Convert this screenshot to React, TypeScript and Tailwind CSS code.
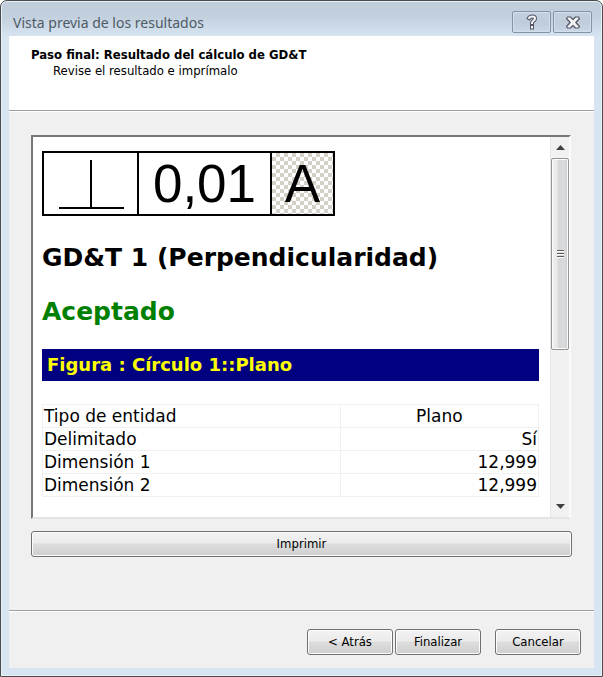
import type { ReactNode } from "react";

type EntityRow = {
  label: string;
  value: string;
  centered?: boolean;
};

const rows: EntityRow[] = [
  { label: "Tipo de entidad", value: "Plano", centered: true },
  { label: "Delimitado", value: "Sí" },
  { label: "Dimensión 1", value: "12,999" },
  { label: "Dimensión 2", value: "12,999" },
];

function DialogButton({ children, className = "" }: { children: ReactNode; className?: string }) {
  return <button type="button" className={`flex h-[26px] items-center justify-center rounded-[3px] border border-[#707070] bg-[linear-gradient(#f2f2f2_0%,#ebebeb_46%,#dddddd_50%,#cfcfcf_100%)] text-black shadow-[inset_0_0_0_1px_#fcfcfc] ${className}`}>
    {children}
  </button>;
}

function CaptionButton({ label, children }: { label: string; children: ReactNode }) {
  return <button type="button" aria-label={label} className="flex h-[22px] w-[39px] items-center justify-center rounded-[2px] border border-[#8393a8] bg-[linear-gradient(#c3d0de,#bfccda_50%,#c9d7e6)] shadow-[inset_0_0_0_1px_#d3deea]">
    {children}
  </button>;
}

function Divider() {
  return <div className="h-[2px] shrink-0 border-t border-[#a0a0a0] bg-white" />;
}

function ToleranceFrame() {
  return <div className="flex h-[65px] w-fit border-2 border-black font-['Liberation_Sans',Arial,sans-serif] text-[53px] leading-[61px] text-black">
    <div className="w-[95px] border-r-2 border-black">
      <svg width="93" height="61" viewBox="0 0 93 61" role="img" aria-label="Perpendicularidad">
        <path d="M47 7V54M15 55H80" fill="none" stroke="#000" strokeWidth="2" />
      </svg>
    </div>
    <div className="w-[133px] border-r-2 border-black text-center">0,01</div>
    <div className="w-[61px] bg-[conic-gradient(#d4d0c8_25%,#fff_0_50%,#d4d0c8_0_75%,#fff_0)] bg-size-[8px_8px] text-center">A</div>
  </div>;
}

function ScrollBar() {
  return <div className="flex w-[19px] shrink-0 flex-col items-center border-l border-[#e6e6e6] bg-[#f1f1f1]">
    <button type="button" aria-label="Subir" className="flex h-[21px] w-full shrink-0 items-center justify-center">
      <svg width="9" height="5" viewBox="0 0 9 5"><path d="M4.5 0L9 5H0Z" fill="#404040" /></svg>
    </button>
    <div className="flex h-[192px] w-full flex-col items-center justify-center gap-px rounded-[2px] border border-[#959595] bg-[linear-gradient(90deg,#f3f3f3_0%,#e6e6e8_34%,#d7d8da_36%,#d9dadc_80%,#c9cacc_100%)] shadow-[inset_0_0_0_1px_#fafafa]">
      <span className="h-[2px] w-[7px] border-b border-white bg-[#5a5a5a]" />
      <span className="h-[2px] w-[7px] border-b border-white bg-[#5a5a5a]" />
      <span className="h-[2px] w-[7px] border-b border-white bg-[#5a5a5a]" />
    </div>
    <div className="flex-1" />
    <button type="button" aria-label="Bajar" className="flex h-[21px] w-full shrink-0 items-center justify-center">
      <svg width="9" height="5" viewBox="0 0 9 5"><path d="M0 0H9L4.5 5Z" fill="#404040" /></svg>
    </button>
  </div>;
}

export default function App() {
  return <div className="min-h-screen bg-white">
    <div className="flex min-h-screen flex-col rounded-t-[7px] border border-[#4b4b4d] bg-[linear-gradient(#bfcddb_0px,#c3d0de_16px,#d7e4f2_36px)] px-2 pb-2 font-['DejaVu_Sans_Condensed','DejaVu_Sans',sans-serif] text-[13px] leading-4 text-black shadow-[inset_0_0_0_1px_#e8f0f8]">
      <header className="flex h-[35px] shrink-0 items-end justify-between pb-[3px]">
        <h1 className="pl-1 font-['Noto_Sans',sans-serif] text-[14px] leading-5 text-[#4f5b66]">Vista previa de los resultados</h1>
        <div className="flex gap-[2px] pr-[2px]">
          <CaptionButton label="Ayuda">
            <svg width="12" height="16" viewBox="0 0 12 16" fill="none" strokeLinecap="square">
              <path d="M3 4C4 2 9 1.500 9 4.500C9 7 6 6.500 6 9M6 13V13.500" stroke="#535666" strokeWidth="4" />
              <path d="M3 4C4 2 9 1.500 9 4.500C9 7 6 6.500 6 9M6 13V13.500" stroke="#f6f6f6" strokeWidth="2" />
            </svg>
          </CaptionButton>
          <CaptionButton label="Cerrar">
            <svg width="14" height="13" viewBox="0 0 14 13">
              <path d="M1.500 1H4.500L7 3.500L9.500 1H12.500L13.500 2.500L9.800 6.500L13.500 10.500L12.500 12H9.500L7 9.500L4.500 12H1.500L.5 10.500L4.200 6.500L.5 2.500Z" fill="#f4f4f4" stroke="#535666" strokeWidth="1.200" strokeLinejoin="round" />
            </svg>
          </CaptionButton>
        </div>
      </header>

      <main className="flex flex-1 flex-col bg-[#f0f0f0]">
        <section className="h-[74px] shrink-0 bg-white pt-[11px] pl-[22px]">
          <h2 className="font-bold">Paso final: Resultado del cálculo de GD&amp;T</h2>
          <p className="pl-[22px]">Revise el resultado e imprímalo</p>
        </section>
        <Divider />

        <section className="flex flex-1 flex-col gap-3 px-[22px] pt-[23px] pb-[53px]">
          <div className="mr-px flex flex-1 border-2 border-t-[#777777] border-r-[#fafafa] border-b-[#e3e3e3] border-l-[#777777] bg-white">
            <article className="flex-1 overflow-hidden pt-[14px] pr-[11px] pl-[9px] font-['DejaVu_Sans',Verdana,sans-serif]">
              <ToleranceFrame />
              <h3 className="mt-[26px] text-[25px] leading-8 font-bold">GD&amp;T 1 (Perpendicularidad)</h3>
              <p className="mt-[22px] text-[25px] leading-8 font-bold text-[#008000]">Aceptado</p>
              <h4 className="mt-[21px] bg-[#000080] px-[5px] text-[18px] leading-8 font-bold text-[#ffff00]">Figura : Círculo 1::Plano</h4>
              <table className="mt-[23px] w-full border-collapse text-[17px] leading-[22px]">
                <tbody>{rows.map((row) => <tr key={row.label}>
                  <th scope="row" className="w-3/5 border border-[#f0f0f0] px-px text-left font-normal">{row.label}</th>
                  <td className={`border border-[#f0f0f0] px-px ${row.centered ? "text-center" : "text-right"}`}>{row.value}</td>
                </tr>)}</tbody>
              </table>
            </article>
            <ScrollBar />
          </div>
          <DialogButton className="w-full">Imprimir</DialogButton>
        </section>

        <Divider />
        <footer className="flex h-[56px] shrink-0 items-start justify-end pt-[17px] pr-[13px]">
          <DialogButton className="mr-[2px] w-[86px]">&lt; Atrás</DialogButton>
          <DialogButton className="mr-[14px] w-[86px]">Finalizar</DialogButton>
          <DialogButton className="w-[86px]">Cancelar</DialogButton>
        </footer>
      </main>
    </div>
  </div>;
}
